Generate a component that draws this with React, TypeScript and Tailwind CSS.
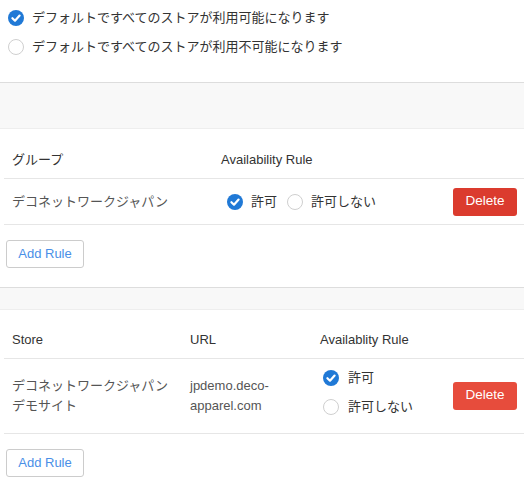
import React from "react";

const FONT = { fontFamily: '"Liberation Sans", "Noto Sans CJK JP", sans-serif' };

function Radio({ checked }: { checked: boolean }) {
  if (checked) {
    return (
      <svg width="16" height="16" viewBox="0 0 16 16" className="shrink-0">
        <circle cx="8" cy="8" r="8" fill="#2079d6" />
        <path d="M4.4 8.2 L7 10.7 L11.6 5.6" fill="none" stroke="#fff" strokeWidth="2.2" strokeLinecap="round" strokeLinejoin="round" />
      </svg>
    );
  }
  return (
    <svg width="16" height="16" viewBox="0 0 16 16" className="shrink-0">
      <circle cx="8" cy="8" r="7.5" fill="#fff" stroke="#cfcfcf" strokeWidth="1" />
    </svg>
  );
}

function AddRule() {
  return (
    <button className="ml-[6px] h-[28px] w-[78px] rounded-[3px] border border-[#cccccc] bg-white text-[13px] text-[#4a8fe7]">
      Add Rule
    </button>
  );
}

function DeleteBtn({ color }: { color: string }) {
  return (
    <button className={`h-[28px] w-[64px] rounded-[3px] text-[13.5px] text-white ${color}`}>Delete</button>
  );
}

export default function App() {
  return (
    <div className="w-[524px] bg-white text-[13px] text-[#333]" style={FONT}>
      {/* top radios */}
      <div className="pt-[3px] pb-[21px]">
        <div className="flex h-[29px] items-center gap-[8px] pl-[8px]">
          <Radio checked />
          <span>デフォルトですべてのストアが利用可能になります</span>
        </div>
        <div className="flex h-[29px] items-center gap-[8px] pl-[8px]">
          <Radio checked={false} />
          <span>デフォルトですべてのストアが利用不可能になります</span>
        </div>
      </div>

      {/* band 1 */}
      <div className="h-[47px] border-t border-b border-t-[#dddddd] border-b-[#eeeeee] bg-[#f8f8f8]" />

      {/* table 1 */}
      <div className="ml-[4px] mt-[13px] w-[520px]">
        <div className="grid h-[37px] grid-cols-[209px_232px_1fr] items-center border-b border-[#e6e6e6]">
          <div className="pl-[8px]">グループ</div>
          <div className="pl-[8px]">Availability Rule</div>
          <div />
        </div>
        <div className="grid h-[46px] grid-cols-[209px_232px_1fr] items-center border-b border-[#e6e6e6]">
          <div className="pl-[8px] text-[#555]">デコネットワークジャパン</div>
          <div className="flex items-center pl-[14px]">
            <Radio checked />
            <span className="ml-[8px]">許可</span>
            <span className="ml-[10px]"><Radio checked={false} /></span>
            <span className="ml-[8px]">許可しない</span>
          </div>
          <div className="pl-[8px]">
            <DeleteBtn color="bg-[#db3b2e]" />
          </div>
        </div>
      </div>
      <div className="mt-[15px] mb-[19px]">
        <AddRule />
      </div>

      {/* band 2 */}
      <div className="h-[23px] border-t border-b border-t-[#dddddd] border-b-[#eeeeee] bg-[#f8f8f8]" />

      {/* table 2 */}
      <div className="ml-[4px] mt-[12px] w-[520px]">
        <div className="grid h-[37px] grid-cols-[178px_130px_133px_1fr] items-center border-b border-[#e6e6e6]">
          <div className="pl-[8px]">Store</div>
          <div className="pl-[8px]">URL</div>
          <div className="pl-[8px]">Availablity Rule</div>
          <div />
        </div>
        <div className="grid h-[75px] grid-cols-[178px_130px_133px_1fr] items-center border-b border-[#e6e6e6]">
          <div className="pl-[8px] leading-[20px] text-[#555]">
            デコネットワークジャパン
            <br />
            デモサイト
          </div>
          <div className="pl-[8px] leading-[20px] text-[#555]">
            jpdemo.deco-
            <br />
            apparel.com
          </div>
          <div className="flex flex-col pl-[11px] -mt-[7px]">
            <div className="flex h-[29px] items-center">
              <Radio checked />
              <span className="ml-[9px]">許可</span>
            </div>
            <div className="flex h-[29px] items-center">
              <Radio checked={false} />
              <span className="ml-[9px]">許可しない</span>
            </div>
          </div>
          <div className="pl-[8px] -mt-[1px]">
            <DeleteBtn color="bg-[#e74c3c]" />
          </div>
        </div>
      </div>
      <div className="mt-[15px] pb-[4px]">
        <AddRule />
      </div>
    </div>
  );
}
